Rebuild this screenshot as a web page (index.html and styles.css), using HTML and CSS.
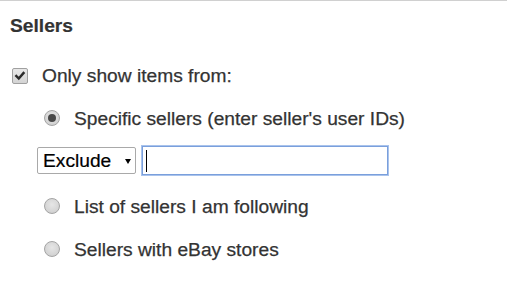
FILE: index.html
```html
<!DOCTYPE html>
<html>
<head>
<meta charset="utf-8">
<link rel="stylesheet" href="styles.css">
</head>
<body>
<div class="panel">
  <h2 class="title">Sellers</h2>
  <div class="row row-check">
    <span class="checkbox"><svg viewBox="0 0 16 16" width="16" height="16"><path d="M3.8 8 L6.6 10.8 L12 4.6" fill="none" stroke="#2a2a2a" stroke-width="2.8" stroke-linecap="square"/></svg></span>
    <span class="label">Only show items from:</span>
  </div>
  <div class="options">
    <div class="row"><span class="radio checked"></span><span class="label">Specific sellers (enter seller's user IDs)</span></div>
    <div class="controls">
      <div class="select"><span class="select-text">Exclude</span><span class="arrow"></span></div>
      <div class="textbox"><span class="caret"></span></div>
    </div>
    <div class="row"><span class="radio"></span><span class="label">List of sellers I am following</span></div>
    <div class="row"><span class="radio"></span><span class="label">Sellers with eBay stores</span></div>
  </div>
</div>
</body>
</html>
```

FILE: styles.css
```css
html, body {
  margin: 0;
  padding: 0;
  background: #fff;
}
body {
  font-family: "Liberation Sans", Arial, sans-serif;
  color: #333;
}
.panel {
  border-top: 1px solid #d0d0d0;
  width: 507px;
  height: 289px;
}
.title {
  margin: 14px 0 0 10px;
  font-size: 19.2px;
  line-height: 22px;
  font-weight: bold;
  -webkit-text-stroke: 0.2px #333;
}
.row {
  display: flex;
  align-items: center;
  height: 22px;
  font-size: 19.2px;
  line-height: 22px;
}
.label {
  -webkit-text-stroke: 0.25px #333;
}
.row-check {
  margin-top: 28px;
  padding-left: 12px;
}
.checkbox {
  width: 14px;
  height: 14px;
  border: 1px solid #a0a0a0;
  border-radius: 2px;
  background: linear-gradient(#e8e8e8, #d4d4d4);
  display: flex;
  align-items: center;
  justify-content: center;
  margin-right: 14px;
  margin-top: -1px;
  flex: none;
}
.checkbox svg {
  display: block;
}
.options {
  padding-left: 44px;
}
.options .row {
  margin-top: 21px;
}
.radio {
  width: 14px;
  height: 14px;
  border: 1px solid #a4a4a4;
  border-radius: 50%;
  background: radial-gradient(circle at 50% 40%, #e6e6e6 0%, #d6d6d6 60%, #c8c8c8 100%);
  display: flex;
  align-items: center;
  justify-content: center;
  margin: -2px 14px 0 0;
  flex: none;
}
.radio.checked::after {
  content: "";
  width: 8px;
  height: 8px;
  border-radius: 50%;
  background: #484848;
}
.controls {
  display: flex;
  align-items: center;
  margin: 16px 0 0 -7px;
  gap: 6px;
}
.select {
  width: 97px;
  height: 25px;
  border: 1px solid #a9a9a9;
  border-radius: 2px;
  display: flex;
  align-items: center;
  box-sizing: content-box;
  font-size: 19.2px;
  color: #000;
  padding: 0;
}
.select-text {
  margin-left: 5px;
  line-height: 22px;
  -webkit-text-stroke: 0.2px #000;
}
.arrow {
  margin-left: 14px;
  margin-top: 1px;
  width: 0;
  height: 0;
  border-left: 3px solid transparent;
  border-right: 3px solid transparent;
  border-top: 5px solid #000;
}
.textbox {
  width: 244px;
  height: 27px;
  border: 1px solid #7a9fdc;
  box-shadow: 0 0 0 1px #a9c3ec;
  display: flex;
  align-items: center;
}
.caret {
  margin-left: 3px;
  width: 1px;
  height: 22px;
  background: #000;
}
```
